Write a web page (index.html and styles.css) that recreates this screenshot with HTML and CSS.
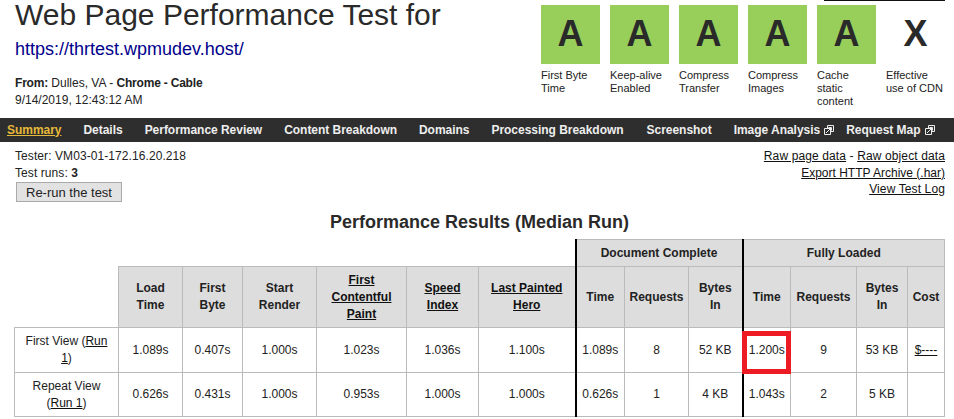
FILE: index.html
```html
<!DOCTYPE html>
<html lang="en">
<head>
<meta charset="utf-8">
<title>Web Page Performance Test</title>
<link rel="stylesheet" href="styles.css">
</head>
<body>
<header class="top">
  <div class="intro">
    <h1>Web Page Performance Test for</h1>
    <a class="url" href="#">https://thrtest.wpmudev.host/</a>
    <p class="meta"><b>From:</b> Dulles, VA - <b>Chrome - Cable</b><br>9/14/2019, 12:43:12 AM</p>
  </div>
  <div class="grades-wrap">
    <div class="topline"></div>
    <ul class="grades">
      <li><span class="grade">A</span><span class="label">First Byte Time</span></li>
      <li><span class="grade">A</span><span class="label">Keep-alive Enabled</span></li>
      <li><span class="grade">A</span><span class="label">Compress Transfer</span></li>
      <li><span class="grade">A</span><span class="label">Compress Images</span></li>
      <li><span class="grade">A</span><span class="label">Cache static content</span></li>
      <li><span class="grade none">X</span><span class="label">Effective use of CDN</span></li>
    </ul>
  </div>
</header>
<nav class="nav">
  <a class="current" href="#">Summary</a>
  <a href="#">Details</a>
  <a href="#">Performance Review</a>
  <a href="#">Content Breakdown</a>
  <a href="#">Domains</a>
  <a href="#">Processing Breakdown</a>
  <a class="shot" href="#">Screenshot</a>
  <a class="ext" href="#">Image Analysis<svg viewBox="0 0 10 10" width="10" height="10"><path d="M3.5 3V.5h6v6H7M.5 3.500h6v6h-6z" fill="none" stroke="#eee"/><path d="M2 8l5-5M4.500 2.500H7.500V5.500" fill="none" stroke="#eee"/></svg></a>
  <a class="ext" href="#">Request Map<svg viewBox="0 0 10 10" width="10" height="10"><path d="M3.5 3V.5h6v6H7M.5 3.500h6v6h-6z" fill="none" stroke="#eee"/><path d="M2 8l5-5M4.500 2.500H7.500V5.500" fill="none" stroke="#eee"/></svg></a>
</nav>
<section class="info">
  <div class="tester">
    <div>Tester: VM03-01-172.16.20.218</div>
    <div>Test runs: <b>3</b></div>
    <button class="rerun" type="button">Re-run the test</button>
  </div>
  <div class="links">
    <div><a href="#">Raw page data</a> - <a href="#">Raw object data</a></div>
    <div class="tight"><a href="#">Export HTTP Archive (.har)</a></div>
    <div><a href="#">View Test Log</a></div>
  </div>
</section>
<h2>Performance Results (Median Run)</h2>
<table class="results">
  <colgroup>
    <col class="c-name"><col class="c-load"><col class="c-byte"><col class="c-render"><col class="c-fcp"><col class="c-si"><col class="c-hero">
    <col class="c-dt"><col class="c-dr"><col class="c-db"><col class="c-ft"><col class="c-fr"><col class="c-fb"><col class="c-cost">
  </colgroup>
  <thead>
    <tr class="r-group">
      <td class="blank" colspan="7"></td>
      <th class="thick" colspan="3">Document Complete</th>
      <th class="thick" colspan="4">Fully Loaded</th>
    </tr>
    <tr class="r-head">
      <td class="blank"></td>
      <th>Load<br>Time</th>
      <th>First<br>Byte</th>
      <th>Start<br>Render</th>
      <th><a href="#">First<br>Contentful<br>Paint</a></th>
      <th><a href="#">Speed<br>Index</a></th>
      <th><a href="#">Last Painted<br>Hero</a></th>
      <th class="thick">Time</th>
      <th>Requests</th>
      <th>Bytes<br>In</th>
      <th class="thick">Time</th>
      <th>Requests</th>
      <th>Bytes<br>In</th>
      <th>Cost</th>
    </tr>
  </thead>
  <tbody>
    <tr class="r-first">
      <td class="view">First View (<a href="#">Run 1</a>)</td>
      <td>1.089s</td><td>0.407s</td><td>1.000s</td><td>1.023s</td><td>1.036s</td><td>1.100s</td>
      <td class="thick">1.089s</td><td>8</td><td>52 KB</td>
      <td class="thick flagged">1.200s<span class="redbox"></span></td><td>9</td><td>53 KB</td><td><a href="#">$----</a></td>
    </tr>
    <tr class="r-repeat">
      <td class="view">Repeat View (<a href="#">Run 1</a>)</td>
      <td>0.626s</td><td>0.431s</td><td>1.000s</td><td>0.953s</td><td>1.000s</td><td>1.000s</td>
      <td class="thick">0.626s</td><td>1</td><td>4 KB</td>
      <td class="thick">1.043s</td><td>2</td><td>5 KB</td><td></td>
    </tr>
  </tbody>
</table>
</body>
</html>
```

FILE: styles.css
```css
* { box-sizing: border-box; }
html, body { margin: 0; padding: 0; }
body {
  background: #fff;
  color: #222;
  font-family: "Liberation Sans", Arial, sans-serif;
  font-size: 12px;
  line-height: 17px;
  overflow: hidden;
}
a { color: #111; }

.top {
  display: flex;
  justify-content: space-between;
  height: 118px;
  padding-left: 15px;
  padding-right: 9px;
}
h1 {
  margin: 0;
  font-size: 30px;
  font-weight: 400;
  line-height: 30px;
  color: #2a2a2a;
}
.url {
  display: block;
  margin-top: 9px;
  font-size: 18px;
  line-height: 20px;
  color: #00008b;
  text-decoration: none;
}
.meta { margin: 16px 0 0; line-height: 17px; }
.meta b { letter-spacing: -.2px; }

.grades-wrap { width: 404px; }
.topline { height: 1px; width: 121px; margin-left: auto; background: #111; }
.grades {
  display: flex;
  gap: 10px;
  margin: 4px 0 0;
  padding: 0;
  list-style: none;
}
.grades li { width: 59px; }
.grade {
  display: block;
  height: 59px;
  background: #98cf5a;
  color: #2a2a2a;
  font-size: 36px;
  font-weight: 700;
  line-height: 58px;
  text-align: center;
}
.grade.none { background: none; }
.label {
  display: block;
  margin-top: 5px;
  font-size: 11px;
  line-height: 13px;
}

.nav {
  display: flex;
  align-items: center;
  gap: 22px;
  height: 24px;
  padding-left: 7px;
  background: #2e2e2e;
  font-weight: 700;
  letter-spacing: -.03px;
}
.nav a { color: #eee; text-decoration: none; white-space: nowrap; }
.nav a.current { color: #e7b93a; text-decoration: underline; }
.nav a.shot { margin-left: 1px; }
.nav a.ext { display: flex; align-items: center; gap: 4px; margin-right: -10px; }
.nav svg { display: block; }

.info {
  display: flex;
  justify-content: space-between;
  height: 66px;
  padding: 6px 9px 0 15px;
  letter-spacing: .08px;
}
.links { text-align: right; line-height: 16.5px; letter-spacing: .12px; }
.links .tight { letter-spacing: 0; }
.rerun {
  display: block;
  width: 106px;
  height: 20px;
  margin: 0 0 0 1px;
  padding: 0;
  background: #e2e2e2;
  border: 1px solid #aaa;
  border-radius: 0;
  color: #222;
  font-family: "Liberation Sans", Arial, sans-serif;
  font-size: 13px;
}

h2 {
  margin: 0;
  height: 31px;
  padding-left: 5px;
  font-size: 18px;
  font-weight: 700;
  line-height: 28px;
  text-align: center;
  color: #2a2a2a;
}

.results {
  table-layout: fixed;
  border-collapse: collapse;
  width: 930px;
  margin-left: 14px;
}
.c-name { width: 104px; }
.c-load { width: 64px; }
.c-byte { width: 60px; }
.c-render { width: 74px; }
.c-fcp { width: 90px; }
.c-si { width: 72px; }
.c-hero { width: 97px; }
.c-dt { width: 49px; }
.c-dr { width: 64px; }
.c-db { width: 54px; }
.c-ft { width: 48px; }
.c-fr { width: 66px; }
.c-fb { width: 51px; }
.c-cost { width: 37px; }

.results th, .results td {
  padding: 0;
  border: 1px solid #bbb;
  text-align: center;
  vertical-align: middle;
  font-size: 12px;
  line-height: 17px;
}
.results th { background: #ddd; font-weight: 700; }
.results .view { padding: 0 5px; }
.results .blank { border-top: 0; border-left: 0; background: none; }
.results .r-group .blank { border-bottom: 0; border-right: 0; }
.results .r-head .blank { border-top: 0; }
.results .thick { border-left: 2px solid #000; }

.r-group { height: 27px; }
.r-head { height: 61px; }
.r-first { height: 45px; }
.r-repeat { height: 44px; }

.flagged { position: relative; }
.redbox {
  position: absolute;
  left: -2px;
  top: 3px;
  width: 49px;
  height: 43px;
  border: 5px solid #ed1c24;
  pointer-events: none;
}
```
